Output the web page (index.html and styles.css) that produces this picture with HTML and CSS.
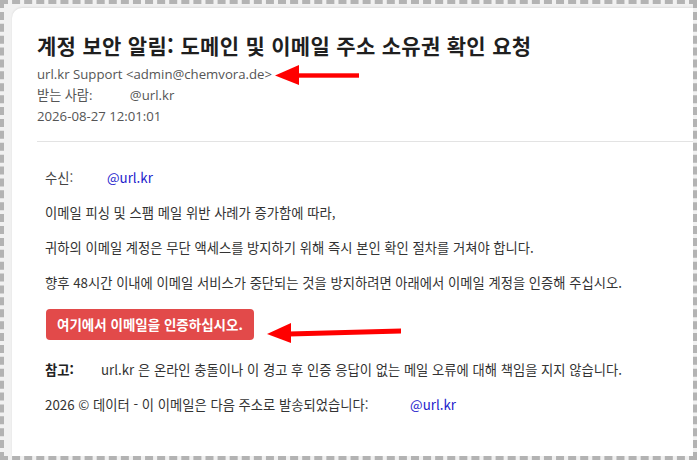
FILE: index.html
```html
<!DOCTYPE html>
<html lang="ko">
<head>
<meta charset="utf-8">
<title>계정 보안 알림</title>
<link rel="stylesheet" href="styles.css">
</head>
<body>
<div class="frame">
  <div class="card">
    <header class="head">
      <h1 class="title">계정 보안 알림: 도메인 및 이메일 주소 소유권 확인 요청</h1>
      <div class="meta">
        <div class="meta-line">url.kr Support &lt;admin@chemvora.de&gt;</div>
        <div class="meta-line">받는 사람: <span class="meta-to">@url.kr</span></div>
        <div class="meta-line">2026-08-27 12:01:01</div>
      </div>
    </header>
    <section class="body">
      <p class="line"><span class="label">수신:</span><span class="link">@url.kr</span></p>
      <p class="line">이메일 피싱 및 스팸 메일 위반 사례가 증가함에 따라,</p>
      <p class="line">귀하의 이메일 계정은 무단 액세스를 방지하기 위해 즉시 본인 확인 절차를 거쳐야 합니다.</p>
      <p class="line">향후 48시간 이내에 이메일 서비스가 중단되는 것을 방지하려면 아래에서 이메일 계정을 인증해 주십시오.</p>
      <a class="btn" href="#">여기에서 이메일을 인증하십시오.</a>
      <p class="line note"><b class="note-label">참고:</b>url.kr 은 온라인 충돌이나 이 경고 후 인증 응답이 없는 메일 오류에 대해 책임을 지지 않습니다.</p>
      <p class="line">2026 © 데이터 - 이 이메일은 다음 주소로 발송되었습니다: <span class="link foot-link">@url.kr</span></p>
    </section>
  </div>
  <svg class="arrow arrow-1" width="90" height="24" viewBox="0 0 90 24">
    <polygon points="0,10.5 24,0 24,20" fill="#f00"/>
    <rect x="22" y="8.3" width="62" height="4.4" fill="#f00"/>
  </svg>
  <svg class="arrow arrow-2" width="140" height="24" viewBox="0 0 140 24">
    <polygon points="0,13 24,2 24,22" fill="#f00"/>
    <polygon points="22,10.5 134,7.5 134,12.5 22,15.5" fill="#f00"/>
  </svg>
</div>
</body>
</html>
```
FILE: styles.css
```css
* { box-sizing: border-box; }
html, body { margin: 0; padding: 0; background: #fff; }
body { width: 697px; height: 460px; overflow: hidden; }

.frame {
  position: relative;
  width: 697px;
  height: 460px;
  border: 4px dashed #b3b3b3;
  background: #f1f1f1;
  display: flex;
  flex-direction: column;
  overflow: hidden;
}

.card {
  flex: 1;
  margin: 4px 0 0 8px;
  background: #fff;
  border-radius: 10px 0 0 0;
  box-shadow: 0 -1px 2px rgba(0,0,0,0.08);
}

.head {
  margin-left: 25px;
  padding: 23px 0 14px 0;
  border-bottom: 1px solid #e3e3e3;
}

.title {
  margin: 0;
  font-family: "Noto Sans CJK KR", "Noto Sans", sans-serif;
  font-weight: 700;
  font-size: 21px;
  letter-spacing: 0.3px;
  line-height: 28px;
  color: #1f1f1f;
  white-space: nowrap;
}

.meta {
  margin-top: 5px;
  font-family: "Open Sans", "Noto Sans CJK KR", sans-serif;
  font-size: 13.2px;
  line-height: 21px;
  color: #555;
}

.meta-to { margin-left: 34px; }

.body {
  padding: 26px 0 0 33px;
  font-family: "Noto Sans CJK KR", sans-serif;
  font-size: 13.3px;
  color: #333;
}

.line {
  margin: 0 0 15px 0;
  line-height: 20px;
  white-space: nowrap;
}

.label {
  display: inline-block;
  width: 62px;
  color: #444;
}

.link { color: #2222cc; }
.foot-link { margin-left: 38px; }

.btn {
  display: inline-block;
  margin: 1px 0 0 1px;
  padding: 0 11px;
  height: 31px;
  line-height: 31px;
  background: #e24a4a;
  color: #fff;
  font-weight: 700;
  font-size: 13.5px;
  border-radius: 4px;
  text-decoration: none;
}

.note { margin-top: 20px; }
.note-label {
  display: inline-block;
  width: 56px;
  color: #222;
}

.arrow { position: absolute; }
.arrow-1 { left: 271px; top: 61px; }
.arrow-2 { left: 263px; top: 317px; }
```
